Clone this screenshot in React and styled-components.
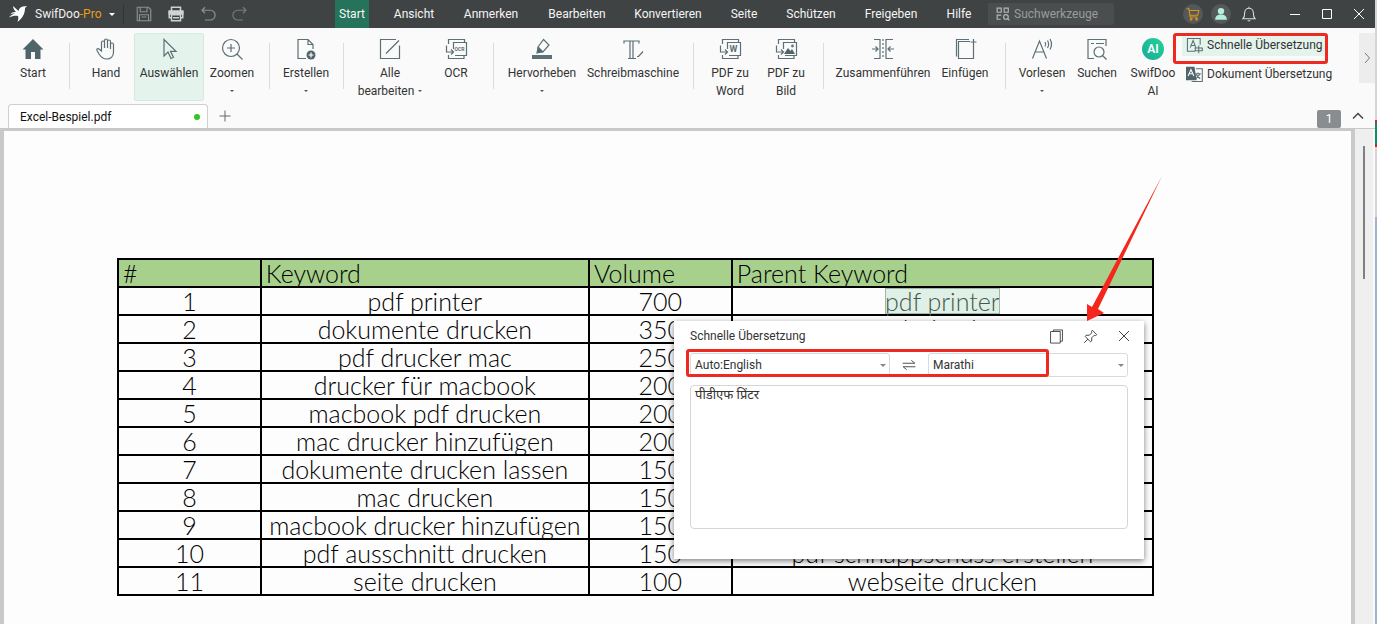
import React from 'react'
import styled, { createGlobalStyle } from 'styled-components'

const GlobalStyle = createGlobalStyle`
  * { box-sizing: border-box; }
  html, body, #root { height: 100%; }
  body {
    margin: 0;
    overflow: hidden;
    font-family: Roboto, "Noto Sans", sans-serif;
    font-size: 12px;
    line-height: 18px;
    color: #333;
  }
  button, input, select, textarea {
    font: inherit;
    color: inherit;
    margin: 0;
    padding: 0;
    border: 0;
    background: none;
  }
`

const Desktop = styled.div`
  display: flex;
  height: 100vh;
`
const Window = styled.div`
  flex: 1;
  min-width: 0;
  display: flex;
  flex-direction: column;
  background: #fafafa;
`
// sliver of the window lying behind
const BackWindow = styled.div`
  width: 2px;
  background: linear-gradient(#d5d5d5 0 120px, #e02020 120px 123px, #0d9069 123px 144px, #e02020 144px 147px, #d5d5d5 147px 217px, #9fb2ce 217px);
`

/* title bar */
const TitleBar = styled.header`
  height: 28px;
  display: flex;
  align-items: center;
  background: #404344;
  color: #f2f2f2;
`
const Brand = styled.div`
  width: 124px;
  height: 20px;
  padding-left: 9px;
  display: flex;
  align-items: center;
  gap: 8px;
  border-right: 1px solid #323435;
  white-space: nowrap;
  b { font-weight: 400; color: #e79d17; }
  svg { flex: none; }
`
const QuickTools = styled.div`
  width: 211px;
  display: flex;
  gap: 12px;
  padding-left: 10px;
`
const BarButton = styled.button`
  width: ${p => p.$w || 20}px;
  height: 20px;
  display: flex;
  align-items: center;
  justify-content: center;
  border-radius: 50%;
  background: ${p => (p.$round ? '#55585a' : 'none')};
`
const Menu = styled.nav`
  height: 28px;
  display: flex;
`
const MenuLink = styled.a`
  width: ${p => p.$w}px;
  line-height: 28px;
  text-align: center;
  text-decoration: none;
  white-space: nowrap;
  color: #f5f5f5;
  background: ${p => (p.$active ? '#26735b' : 'none')};
`
const Search = styled.label`
  width: 126px;
  height: 22px;
  margin-left: 13px;
  display: flex;
  align-items: center;
  gap: 4px;
  padding-left: 8px;
  border-radius: 2px;
  background: #4b4e4f;
  svg { flex: none; }
  input { width: 100px; outline: none; }
  input::placeholder { color: #9a9c9d; opacity: 1; }
`
const Account = styled.div`
  margin-left: auto;
  display: flex;
  gap: 8px;
`
const WindowButtons = styled.div`
  display: flex;
  margin-left: 20px;
`

/* ribbon */
const Ribbon = styled.div`
  display: flex;
  padding: 5px 0 0 6px;
`
const Tool = styled.button`
  width: ${p => p.$w}px;
  height: 68px;
  flex: none;
  display: flex;
  flex-direction: column;
  align-items: center;
  padding-top: 3px;
  white-space: nowrap;
  border: 1px solid ${p => (p.$active ? '#d3eade' : 'transparent')};
  border-radius: 2px;
  background: ${p => (p.$active ? '#e4f4ed' : 'none')};
`
const ToolLabel = styled.span`
  display: block;
  margin-top: 3px;
  height: 18px;
`
const SecondLine = styled.span`
  height: 18px;
  display: flex;
  align-items: center;
  gap: 4px;
`
const Caret = styled.i`
  border: solid transparent;
  border-width: ${p => p.$size || 2}px ${p => p.$size || 2}px 0;
  border-top-color: ${p => p.$color || '#555'};
`
const Divider = styled.span`
  flex: none;
  width: 18px;
  height: 46px;
  margin-top: 10px;
  display: flex;
  justify-content: center;
  &::before { content: ''; width: 1px; background: #dcdcdc; }
`
const Stack = styled.div`
  display: flex;
  flex-direction: column;
  align-items: flex-start;
  gap: 7px;
  padding-top: 1px;
`
const Marked = styled.div`
  position: relative;
`
// red frame drawn over the controls
const Frame = styled.span`
  position: absolute;
  top: ${p => p.$top}px;
  left: ${p => p.$left}px;
  width: ${p => p.$w}px;
  height: ${p => p.$h}px;
  border: 3px solid #ee2a20;
  border-radius: 3px;
  pointer-events: none;
`
const SmallTool = styled.button`
  height: 22px;
  display: flex;
  align-items: center;
  gap: 4px;
  padding: 0 4px;
  white-space: nowrap;
  background: ${p => (p.$active ? '#e4f4ed' : 'none')};
`
const NextTools = styled.button`
  margin-left: auto;
  width: 16px;
  height: 50px;
  display: flex;
  align-items: center;
  justify-content: center;
  background: #ededed;
`

/* tabs */
const TabRow = styled.div`
  height: 27px;
  display: flex;
  align-items: flex-end;
  padding-left: 8px;
`
const Tab = styled.button`
  width: 200px;
  height: 24px;
  display: flex;
  align-items: center;
  justify-content: space-between;
  padding: 0 7px 0 11px;
  color: #111;
  background: #fff;
  border: 1px solid #cfcfcf;
  border-bottom: 0;
  border-radius: 4px 4px 0 0;
`
const Unsaved = styled.i`
  width: 6px;
  height: 6px;
  border-radius: 50%;
  background: #2fc81e;
`
const TabButton = styled.button`
  width: 34px;
  height: 24px;
  display: flex;
  align-items: center;
  justify-content: center;
`
const PageCount = styled.span`
  margin-left: auto;
  width: 24px;
  height: 18px;
  text-align: center;
  color: #fff;
  background: #8a8d8f;
  border-radius: 2px;
`

/* document */
const Viewer = styled.main`
  flex: 1;
  min-height: 0;
  display: flex;
  border-top: 1px solid #c8c8c8;
`
const Page = styled.section`
  flex: 1;
  position: relative;
  padding: 127px 197px 0 113px;
  background: #fdfdfd;
  border: solid #c9c9c9;
  border-width: 2px 4px 0;
  overflow: hidden;
`
const ScrollBar = styled.div`
  width: 20px;
  padding: 17px 9px 0 8px;
  border-right: 2px solid #fafafa;
  background: #efefef;
  &::before {
    content: '';
    display: block;
    width: 2px;
    height: 133px;
    background: #808080;
  }
`
const Table = styled.table`
  width: 100%;
  table-layout: fixed;
  border-collapse: collapse;
  font-family: Lato, sans-serif;
  font-weight: 300;
  font-size: 25px;
  font-variant-ligatures: none;
  line-height: 26px;
  color: #000;
  th, td {
    height: 28px;
    padding: 0 4px;
    border: 2px solid #000;
    white-space: nowrap;
    text-align: center;
  }
  th {
    font-weight: 300;
    text-align: left;
    background: #a8d08d;
  }
`
const Selected = styled.mark`
  display: block;
  width: fit-content;
  height: 26px;
  margin: 0 auto;
  color: #3f5a4b;
  background: #e0f0e6;
  outline: 1px solid #9db8a8;
  outline-offset: -1px;
`

/* translation popup */
const Popup = styled.div`
  position: absolute;
  top: 190px;
  right: 207px;
  width: 470px;
  height: 238px;
  padding: 3px 16px;
  background: #fff;
  box-shadow: 0 2px 6px rgba(0, 0, 0, 0.5);
`
const PopupHead = styled.div`
  height: 24px;
  display: flex;
  align-items: center;
  h2 { margin: 0 auto 0 0; font-size: 12px; font-weight: 400; }
`
const PopupButton = styled.button`
  width: 24px;
  height: 24px;
  margin-left: 10px;
  display: flex;
  align-items: center;
  justify-content: center;
  &:last-child { margin-right: -8px; }
`
const Languages = styled.div`
  margin-top: 5px;
  display: flex;
  align-items: center;
`
const SelectBox = styled.span`
  flex: 1;
  height: 24px;
  display: flex;
  align-items: center;
  padding-right: 3px;
  border: 1px solid #dadada;
  border-radius: 3px;
  select {
    flex: 1;
    padding-left: 4px;
    appearance: none;
    outline: none;
  }
`
const Swap = styled.button`
  width: 38px;
  height: 24px;
  display: flex;
  align-items: center;
  justify-content: center;
`
const Result = styled.textarea`
  display: block;
  width: 100%;
  height: 144px;
  margin-top: 8px;
  padding: 0 4px;
  font-size: 13px;
  border: 1px solid #d6d6d6;
  border-radius: 4px;
  resize: none;
  outline: none;
`
const Arrow = styled.svg`
  position: absolute;
  top: 45px;
  right: 186px;
`

function Icon({ size = 24, color = '#5b6f75', sw = 1.2, children }) {
  return (
    <svg width={size} height={size} viewBox="0 0 24 24" fill="none" stroke={color} strokeWidth={sw} aria-hidden="true">
      {children}
    </svg>
  )
}

const convertFrame = (
  <>
    <path d="M4.500 7V2.500H20.500V5M4.500 18v3.500h15.500V19" />
    <path d="M2.500 8.500v6.500H9M7 12.500l2.500 2.500L7 17.500" />
    <path d="M9.500 12V5.500h13v13H11" />
  </>
)

const icons = {
  home: <path d="M12 2 1.500 12.500H4.500V22h5.500v-7h4v7h5.500v-9.500h3z" fill="#4f646b" stroke="none" />,
  hand: <path d="M7.500 14V5.500a1.500 1.500 0 0 1 3 0V11V3.500a1.500 1.500 0 0 1 3 0V11V4.500a1.500 1.500 0 0 1 3 0V12V7.500a1.500 1.500 0 0 1 3 0V15c0 4-2.500 7-7 7-4 0-5.500-2-7.500-5L3 13.500c-.8-1.500 1-2.500 2-1.500z" />,
  cursor: <path d="M7 2.500V19l4-4 3 6.500 2.500-1.200-3-6H19z" />,
  zoom: <><circle cx="11" cy="11" r="8.500" /><path d="M17 17l5.500 5.500M11 7v8M7 11h8" /></>,
  create: <><path d="M12 21.500H4v-19h10l5 5V12M14 2.500v5h5" /><circle cx="17" cy="18" r="4.500" fill="#4f646b" stroke="none" /><path d="M17 15.500v5M14.500 18h5" stroke="#fff" /></>,
  edit: <path d="M18 2.500H2.500v19h19V8.500M8 16.500 21 3.500" />,
  ocr: <>{convertFrame}<text x="10.500" y="14" fontSize="5" fontWeight="700" fill="#5b6f75" stroke="none">OCR</text></>,
  highlight: <><path d="M8 10l5.500-7.500 5.500 5.500-6 7H8.500zM8 10l5 5" /><path d="M8 11l4 4-5 1z" fill="#4f646b" /><path d="M2 20h20" strokeWidth="4" /></>,
  type: <path d="M3 6.500V4h15v2.500M9 4v17.500M12 4v17.500M7 21.500h8M16 19.500h1.500l4.500-5" />,
  word: <>{convertFrame}<text x="11.500" y="15" fontSize="9" fontWeight="700" fill="#5b6f75" stroke="none">W</text></>,
  image: <>{convertFrame}<path d="M10 17l4-6 2.500 3 1.500-2 3 5z" fill="#4f646b" stroke="none" /><circle cx="18.500" cy="9" r=".8" /></>,
  merge: <><path d="M3 2.500h6v19H3M22 2.500h-7v19h7M1 12h6M4.500 9.500 7 12l-2.500 2.500M23 12h-6M19.500 9.500 17 12l2.500 2.500" /><path d="M12 2v20" strokeDasharray="2 2" /></>,
  insert: <path d="M16 2.500H3.500v17M17 4.500H5.500v17h15V8M20.500 2v6M17.500 5h6" />,
  read: <><path d="M2.500 21.500 9.500 4l7 17.500M5 15h9" /><path d="M15 5c1 1.500 1 3 0 4.500M17.500 3.500c1.500 2.500 1.500 5 0 7.500M20 2c2 3.500 2 7 0 10.500" /></>,
  find: <><path d="M21 9V2.500H3v19h6M6 6.500h3M11 6.500h8" /><circle cx="14" cy="15" r="5" /><path d="M17.500 18.500l4 4" /></>,
  ai: <><defs><linearGradient id="ai" x1="1" x2="0" y1="0" y2="1"><stop stopColor="#21d39a" /><stop offset="1" stopColor="#1caa94" /></linearGradient></defs><circle cx="12" cy="12" r="11" fill="url(#ai)" stroke="none" /><text x="12" y="16" textAnchor="middle" fontSize="12" fontWeight="600" fill="#fff" stroke="none">AI</text></>,
}

const ribbon = [
  { icon: 'home', label: 'Start', w: 54 },
  null,
  { icon: 'hand', label: 'Hand', w: 56 },
  { icon: 'cursor', label: 'Auswählen', w: 70, active: true },
  { icon: 'zoom', label: 'Zoomen', w: 56, more: true },
  null,
  { icon: 'create', label: 'Erstellen', w: 56, more: true },
  null,
  { icon: 'edit', label: 'Alle', line2: 'bearbeiten', w: 76, more: true },
  { icon: 'ocr', label: 'OCR', w: 56 },
  null,
  { icon: 'highlight', label: 'Hervorheben', w: 80, more: true },
  { icon: 'type', label: 'Schreibmaschine', w: 102 },
  null,
  { icon: 'word', label: 'PDF zu', line2: 'Word', w: 56 },
  { icon: 'image', label: 'PDF zu', line2: 'Bild', w: 56 },
  null,
  { icon: 'merge', label: 'Zusammenführen', w: 102 },
  { icon: 'insert', label: 'Einfügen', w: 62 },
  null,
  { icon: 'read', label: 'Vorlesen', w: 56, more: true },
  { icon: 'find', label: 'Suchen', w: 54 },
  { icon: 'ai', label: 'SwifDoo', line2: 'AI', w: 58 },
]

const menu = [
  ['Start', 34], ['Ansicht', 90], ['Anmerken', 64], ['Bearbeiten', 108], ['Konvertieren', 74],
  ['Seite', 78], ['Schützen', 56], ['Freigeben', 104], ['Hilfe', 32],
]

const rows = [
  ['pdf printer', 700, 'pdf printer'],
  ['dokumente drucken', 350, 'pdf drucker'],
  ['pdf drucker mac', 250, ''],
  ['drucker für macbook', 200, ''],
  ['macbook pdf drucken', 200, ''],
  ['mac drucker hinzufügen', 200, ''],
  ['dokumente drucken lassen', 150, ''],
  ['mac drucken', 150, ''],
  ['macbook drucker hinzufügen', 150, ''],
  ['pdf ausschnitt drucken', 150, 'pdf schnappschuss erstellen'],
  ['seite drucken', 100, 'webseite drucken'],
]

function Header() {
  return (
    <TitleBar>
      <Brand>
        <svg width="18" height="18" viewBox="0 0 18 18" fill="#fff" aria-hidden="true">
          <path d="M4 1 9.500 6C10 3.500 11.500 2 14 1.500L18 1l-2 2c0 5-1.500 9-7.500 14 1-3 1-4.500.5-6C6.500 10.500 3 11 0 12.500 1.500 10.500 4 9 6.500 8.500 4.500 8.200 2.500 8.500 1 9.500 2.500 7.500 4.500 6.800 7 7 5.500 5.500 4.200 3.500 4 1z" />
        </svg>
        <span>SwifDoo<b>-Pro</b></span>
        <Caret $size={3} $color="#fff" />
      </Brand>
      <QuickTools>
        <BarButton aria-label="Speichern"><Icon size={18} color="#8d9091" sw={1.500}><path d="M3 3h15l3 3v15H3zM7 3v6h9V3M6 21v-8h12v8M9 16h6" /></Icon></BarButton>
        <BarButton aria-label="Drucken"><Icon size={18} color="#d0d2d3" sw={2}><path d="M6 7V3h12v4M6 17H3V8h18v9h-3" /><path d="M3 9h18v3H3z" fill="#d0d2d3" /><path d="M6 13h12v8H6zM8 17h8" /></Icon></BarButton>
        <BarButton aria-label="Rückgängig"><Icon size={18} color="#8d9091" sw={1.600}><path d="M8 3 4 7l4 4M4 7h11a6.500 6.500 0 0 1 0 13H8" /></Icon></BarButton>
        <BarButton aria-label="Wiederholen"><Icon size={18} color="#77797a" sw={1.600}><path d="M16 3l4 4-4 4M20 7H9a6.500 6.500 0 0 0 0 13h7" /></Icon></BarButton>
      </QuickTools>
      <Menu>
        {menu.map(([name, w], i) => (
          <MenuLink key={name} href="#" $w={w} $active={i === 0}>{name}</MenuLink>
        ))}
      </Menu>
      <Search>
        <Icon size={14} color="#b5b7b8" sw={2}><path d="M2 2h7v7H2zM14 2h7v7h-7zM9 14H2v7h6" /><circle cx="17" cy="17" r="4" /><path d="M20 20l3 3" /></Icon>
        <input placeholder="Suchwerkzeuge" aria-label="Suchwerkzeuge" />
      </Search>
      <Account>
        <BarButton $round aria-label="Shop"><Icon size={14} color="#d9951c" sw={1.800}><path d="M1 3h4l2 14h13M5.500 6H22l-2 8H7" /><circle cx="9" cy="21" r="1.500" /><circle cx="18" cy="21" r="1.500" /></Icon></BarButton>
        <BarButton $round aria-label="Konto"><Icon size={14}><circle cx="12" cy="7" r="5.500" fill="#b3f0dc" stroke="none" /><path d="M2 22c0-6 4-9 10-9s10 3 10 9z" fill="#b3f0dc" stroke="none" /></Icon></BarButton>
        <BarButton aria-label="Hinweise"><Icon size={16} color="#dcdcdc" sw={1.600}><path d="M3 19h18c-2-2-2.500-4-2.500-9a6.500 6.500 0 0 0-13 0c0 5-.5 7-2.500 9zM10 22h4M12 1v3" /></Icon></BarButton>
      </Account>
      <WindowButtons>
        <BarButton $w={32} aria-label="Minimieren"><Icon size={12} color="#fff" sw={2}><path d="M2 13h20" /></Icon></BarButton>
        <BarButton $w={32} aria-label="Maximieren"><Icon size={12} color="#fff" sw={2}><path d="M3 3h18v18H3z" /></Icon></BarButton>
        <BarButton $w={32} aria-label="Schließen"><Icon size={12} color="#fff" sw={2}><path d="M2 2l20 20M22 2 2 22" /></Icon></BarButton>
      </WindowButtons>
    </TitleBar>
  )
}

function Tools() {
  return (
    <Ribbon>
      {ribbon.map((t, i) =>
        t === null ? <Divider key={i} /> : (
          <Tool key={i} $w={t.w} $active={t.active}>
            <Icon>{icons[t.icon]}</Icon>
            <ToolLabel>{t.label}</ToolLabel>
            {(t.line2 || t.more) && <SecondLine>{t.line2}{t.more && <Caret />}</SecondLine>}
          </Tool>
        )
      )}
      <Stack>
        <Marked>
          <SmallTool $active>
            <Icon size={17} sw={1.500}><path d="M13 20H2V2h18v9M6 15l4-10 4 10M7.500 12h5M13 15.500h10v4H13zM18 12v11" /></Icon>
            Schnelle Übersetzung
          </SmallTool>
          <Frame $top={-1} $left={-9} $w={155} $h={31} />
        </Marked>
        <SmallTool>
          <Icon size={17} sw={1.500}>
            <path d="M0 1h12l3 19H0z" fill="#4f646b" stroke="none" />
            <path d="M14 4h9v18H8M13 11h8M17 9v2M14 18l6-7M14 12l6 6" />
            <path d="M3 14 7 5l4 9M4.500 11h5" stroke="#fff" />
          </Icon>
          Dokument Übersetzung
        </SmallTool>
      </Stack>
      <NextTools aria-label="Weitere Werkzeuge"><Icon size={12} color="#777" sw={2}><path d="M8 2l9 10-9 10" /></Icon></NextTools>
    </Ribbon>
  )
}

function TranslatePopup() {
  return (
    <Popup role="dialog" aria-labelledby="popup-title">
      <PopupHead>
        <h2 id="popup-title">Schnelle Übersetzung</h2>
        <PopupButton aria-label="Kopieren"><Icon size={15} color="#444" sw={1.500}><path d="M7 4V1.500h14.500v18H18M2.500 4H18v18.500H2.500z" /></Icon></PopupButton>
        <PopupButton aria-label="Anheften"><Icon size={15} color="#444" sw={1.600}><path d="M15 2l7 7-2 1.500-2-.5-4 4v5l-2 1.500L3.500 12 5 10h5l4-4-.5-2zM8 16l-6 6" /></Icon></PopupButton>
        <PopupButton aria-label="Schließen"><Icon size={12} color="#444" sw={2}><path d="M2 2l20 20M22 2 2 22" /></Icon></PopupButton>
      </PopupHead>
      <Languages>
        <SelectBox>
          <select aria-label="Ausgangssprache"><option>Auto:English</option></select>
          <Caret $size={3} $color="#888" />
        </SelectBox>
        <Swap aria-label="Sprachen tauschen"><Icon size={14} color="#444" sw={1.600}><path d="M1 9h21l-6-5M23 15H2l6 5" /></Icon></Swap>
        <SelectBox>
          <select aria-label="Zielsprache"><option>Marathi</option></select>
          <Caret $size={3} $color="#888" />
        </SelectBox>
      </Languages>
      <Result readOnly aria-label="Übersetzung" defaultValue="पीडीएफ प्रिंटर" />
      <Frame $top={28} $left={12} $w={363} $h={28} />
    </Popup>
  )
}

export default function App() {
  return (
    <Desktop>
      <GlobalStyle />
      <Window>
        <Header />
        <Tools />
        <TabRow>
          <Tab>Excel-Bespiel.pdf<Unsaved /></Tab>
          <TabButton aria-label="Neuer Tab"><Icon size={12} color="#666" sw={2}><path d="M12 1v22M1 12h22" /></Icon></TabButton>
          <PageCount>1</PageCount>
          <TabButton aria-label="Menüband einklappen"><Icon size={12} color="#444" sw={3}><path d="M2 17 12 7l10 10" /></Icon></TabButton>
        </TabRow>
        <Viewer>
          <Page>
            <Table>
              <colgroup>
                <col style={{ width: '13.8%' }} />
                <col style={{ width: '31.7%' }} />
                <col style={{ width: '13.8%' }} />
                <col />
              </colgroup>
              <thead>
                <tr><th>#</th><th>Keyword</th><th>Volume</th><th>Parent Keyword</th></tr>
              </thead>
              <tbody>
                {rows.map(([keyword, volume, parent], i) => (
                  <tr key={keyword}>
                    <td>{i + 1}</td>
                    <td>{keyword}</td>
                    <td>{volume}</td>
                    <td>{i === 0 ? <Selected>{parent}</Selected> : parent}</td>
                  </tr>
                ))}
              </tbody>
            </Table>
            <TranslatePopup />
            <Arrow width="80" height="146" viewBox="0 0 80 146" fill="#f5261b" aria-hidden="true">
              <path d="M77 0 13 133l6 4-17 8V128l5 3z" />
            </Arrow>
          </Page>
          <ScrollBar />
        </Viewer>
      </Window>
      <BackWindow />
    </Desktop>
  )
}
